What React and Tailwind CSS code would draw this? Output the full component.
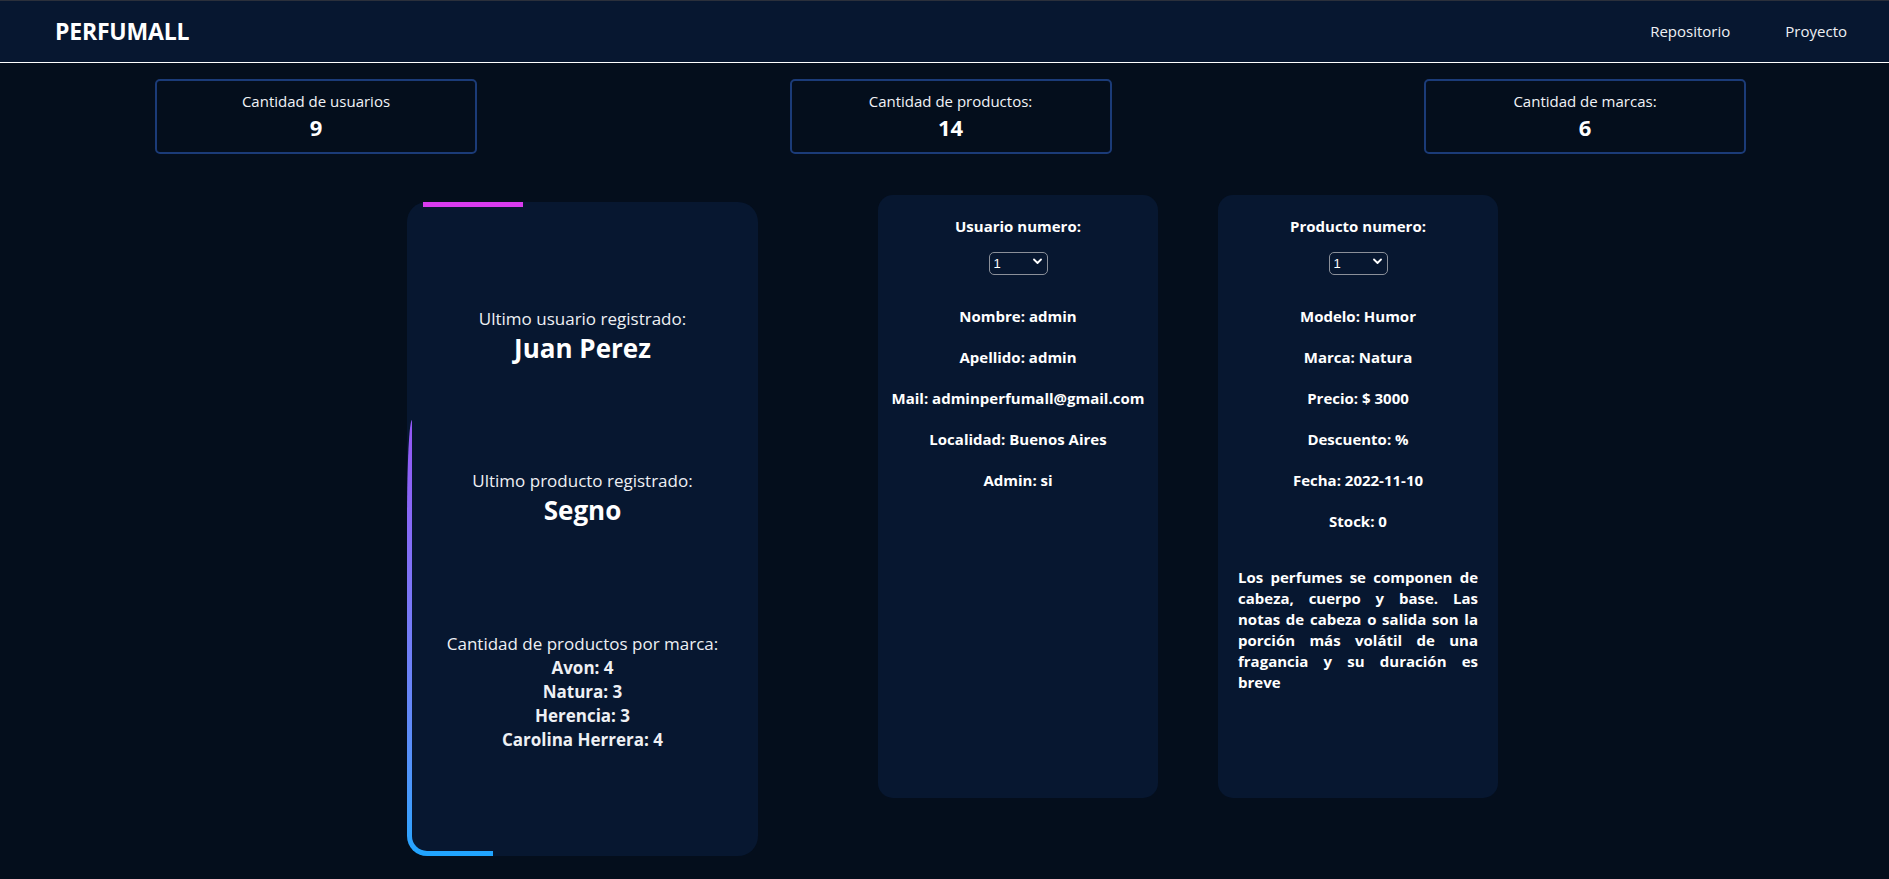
import React from "react";

function Stat({ label, value }) {
  return (
    <div className="w-[322px] h-[75px] border-2 border-[#1b3b78] rounded-[5px] flex flex-col items-center pt-[9px]">
      <div className="text-[15px] leading-[22px] text-[#f1f3f7]">{label}</div>
      <div className="text-[22px] leading-[30px] font-bold text-white">{value}</div>
    </div>
  );
}

function NumberSelect() {
  return (
    <div className="relative mt-[14px] w-[59px] h-[23px]">
      <select
        defaultValue="1"
        className="appearance-none w-full h-full bg-transparent border border-[#8b9099] rounded-[5px] pl-[4px] text-[13px] text-white font-['Liberation_Sans',Arial,sans-serif] outline-none"
      >
        <option className="text-black" value="1">1</option>
        <option className="text-black" value="2">2</option>
        <option className="text-black" value="3">3</option>
      </select>
      <svg
        className="absolute right-[6px] top-[8px] pointer-events-none"
        width="9"
        height="7"
        viewBox="0 0 9 7"
      >
        <path d="M1 1.5 L4.5 5 L8 1.5" fill="none" stroke="white" strokeWidth="1.8" strokeLinecap="round" strokeLinejoin="round" />
      </svg>
    </div>
  );
}

function DetailCard({ title, rows, children }) {
  return (
    <div className="w-[280px] h-[603px] rounded-[15px] bg-[#071730] flex flex-col items-center pt-[21px]">
      <p className="text-[15px] leading-[20px] font-bold text-white">{title}</p>
      <NumberSelect />
      <div className="mt-[33px] flex flex-col items-center gap-[21px]">
        {rows.map((r) => (
          <p key={r} className="text-[15px] leading-[20px] font-bold text-white whitespace-nowrap">
            {r}
          </p>
        ))}
      </div>
      {children}
    </div>
  );
}

export default function App() {
  return (
    <div className="min-h-screen bg-[#040e1c] text-white font-['Open_Sans','Noto_Sans',sans-serif]">
      <nav className="h-[63px] border-t border-t-[#2b303b] border-b border-b-white bg-[#071730] flex items-center justify-between pl-[55px] pr-[42px]">
        <div className="text-[23px] font-bold tracking-[-0.2px] text-white">PERFUMALL</div>
        <div className="flex items-center gap-[55px] text-[15px] text-[#eef0f4]">
          <a href="#">Repositorio</a>
          <a href="#">Proyecto</a>
        </div>
      </nav>

      <div className="mt-[16px] flex justify-between pl-[155px] pr-[143px]">
        <Stat label="Cantidad de usuarios" value="9" />
        <Stat label="Cantidad de productos:" value="14" />
        <Stat label="Cantidad de marcas:" value="6" />
      </div>

      <div className="mt-[41px] ml-[407px] flex items-start pb-[24px]">
        <div className="relative mt-[7px] w-[351px] h-[654px] rounded-[20px] bg-[#071730] flex flex-col justify-evenly items-center text-center">
          <div className="absolute top-0 left-[16px] w-[100px] h-[5px] bg-[#d83bef]" />
          <div className="absolute left-0 bottom-0 w-[86px] h-[436px] rounded-bl-[20px] rounded-tl-[5px_100px] bg-linear-to-b from-[#9456f6] via-[#5f8af8] via-70% to-[#1ea5ff]">
            <div className="absolute left-[5px] top-0 right-0 bottom-[5px] rounded-bl-[15px] bg-[#071730]" />
          </div>
          <div className="relative">
            <p className="text-[17px] leading-[24px] text-[#eef0f4]">Ultimo usuario registrado:</p>
            <p className="text-[26px] leading-[34px] font-bold text-white">Juan Perez</p>
          </div>
          <div className="relative">
            <p className="text-[17px] leading-[24px] text-[#eef0f4]">Ultimo producto registrado:</p>
            <p className="text-[26px] leading-[34px] font-bold text-white">Segno</p>
          </div>
          <div className="relative leading-[24px]">
            <p className="text-[17px] text-[#eef0f4]">Cantidad de productos por marca:</p>
            <p className="text-[17px] font-bold text-[#eef0f4]">Avon: 4</p>
            <p className="text-[17px] font-bold text-[#eef0f4]">Natura: 3</p>
            <p className="text-[17px] font-bold text-[#eef0f4]">Herencia: 3</p>
            <p className="text-[17px] font-bold text-[#eef0f4]">Carolina Herrera: 4</p>
          </div>
        </div>

        <div className="ml-[120px]">
          <DetailCard
            title="Usuario numero:"
            rows={[
              "Nombre: admin",
              "Apellido: admin",
              "Mail: adminperfumall@gmail.com",
              "Localidad: Buenos Aires",
              "Admin: si",
            ]}
          />
        </div>

        <div className="ml-[60px]">
          <DetailCard
            title="Producto numero:"
            rows={[
              "Modelo: Humor",
              "Marca: Natura",
              "Precio: $ 3000",
              "Descuento: %",
              "Fecha: 2022-11-10",
              "Stock: 0",
            ]}
          >
            <p className="mt-[36px] px-[20px] text-[15px] leading-[21px] font-bold text-white text-justify">
              Los perfumes se componen de cabeza, cuerpo y base. Las notas de cabeza o salida son la porción más volátil de una fragancia y su duración es breve
            </p>
          </DetailCard>
        </div>
      </div>
    </div>
  );
}
